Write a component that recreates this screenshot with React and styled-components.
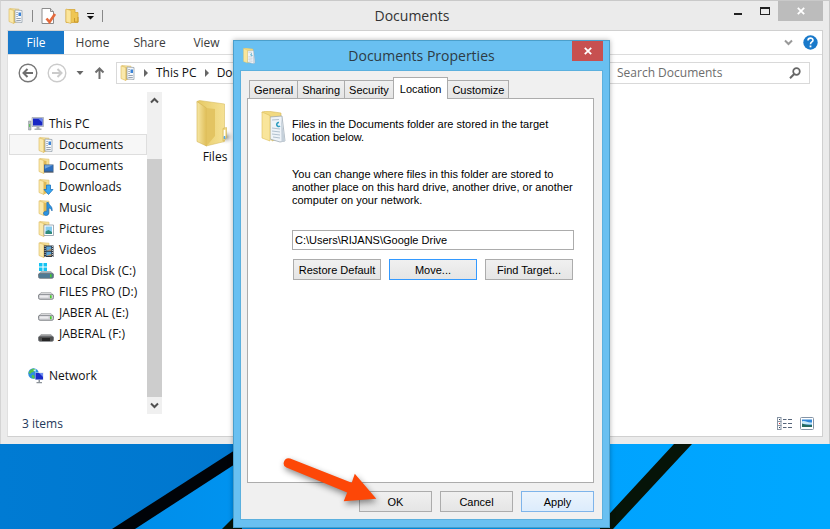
import React from "react";
import styled, { createGlobalStyle } from "styled-components";

const UI_FONT = `"Open Sans", "Noto Sans", sans-serif`;
const DIALOG_FONT = `"Liberation Sans", Arial, sans-serif`;

const Global = createGlobalStyle`
  * { box-sizing: border-box; }
  body { margin: 0; font-family: ${UI_FONT}; font-size: 12px; color: #111; }
  button, input { font: inherit; color: inherit; margin: 0; }
  svg { display: block; flex: none; }
`;

/* ---------- icons ---------- */

const FolderShape = () => (
  <>
    <path d="M2 .5l9 .7v12.300l-6 1.500z" fill="#f4e09a" stroke="#dfc06a" strokeWidth=".6" />
    <path d="M5.500 2.500L8.500 3v10.500L5.500 15.500z" fill="#e0b953" />
    <path d="M1 .8l4.800 1.700v13L1 13.500z" fill="#fae9ac" stroke="#dbb95a" strokeWidth=".6" />
  </>
);

const overlays = {
  documents: (
    <>
      <path d="M7 2l7 .5v12L7 14z" fill="#f5f8fb" stroke="#98a3ae" strokeWidth=".8" />
      <path d="M8.300 4.500h1.500M8.300 6.500h1.500M8.300 8.500h1.500M8.300 10.500h4.500M8.300 12.500h4.500" stroke="#8e9aaa" strokeWidth=".9" />
      <path d="M10.500 4.500H13V8h-2.500z" fill="#3b83d6" />
    </>
  ),
  desktop: (
    <>
      <path d="M6 6.500h9.500V14H6z" fill="#3f5f85" />
      <path d="M6.800 7.300h8v5.500h-8z" fill="#2c6fc0" />
      <path d="M6.800 7.300h8l-8 3.500z" fill="#6fa6df" />
      <path d="M6 14h9.500v1H6z" fill="#8b8f96" />
    </>
  ),
  downloads: (
    <path d="M8.500 6h4v4.500H15L10.500 15.500 6 10.500h2.500z" fill="#3aa7f2" stroke="#1b74bf" strokeWidth=".8" />
  ),
  music: (
    <path d="M8.800 2.500h1.600c.5 3 4.600 3.500 3.600 8.500-.6-2.200-2-2.800-3.200-3V13c0 3.400-5.300 3.200-5.300.6 0-2.100 1.800-2.800 3.300-2.300z" fill="#2b93e0" stroke="#1562a8" strokeWidth=".6" />
  ),
  pictures: (
    <>
      <path d="M6 4h9.500v10.500H6z" fill="#fff" stroke="#8b98a5" strokeWidth=".8" />
      <path d="M7.500 5.500H14V13H7.500z" fill="#84cbee" />
      <path d="M7.500 10.500l3-1.500L14 11v2H7.500z" fill="#2f8a7c" />
    </>
  ),
  videos: (
    <>
      <path d="M6 3.500h9.500V15H6z" fill="#2c3540" />
      <path d="M8.300 4.500h5v4.300h-5zM8.300 9.800h5V14h-5z" fill="#5da6d8" />
      <path d="M8.300 8.800l5-2v2zM8.300 14l5-2v2z" fill="#b98b5b" />
      <path d="M7.100 4v11M14.500 4v11" stroke="#d5dade" strokeWidth=".9" strokeDasharray="1 1" />
    </>
  ),
};

const FolderIcon = ({ kind, size = 16 }) => (
  <svg width={size} height={size} viewBox="0 0 16 16" aria-hidden="true">
    <FolderShape />
    {overlays[kind]}
  </svg>
);

const driveColors = {
  system: { top: "#a5b9c5", body: "#4f7a94" },
  fixed: { top: "#ececee", body: "#cfd0d3" },
  removable: { top: "#a5a5a5", body: "#505050" },
};

const DriveIcon = ({ kind = "fixed" }) => {
  const { top, body } = driveColors[kind];
  return (
    <svg width="16" height="16" viewBox="0 0 16 16" aria-hidden="true">
      {kind === "system" && (
        <path d="M1 0h3.500v3.500H1zM5.500 0H9v3.500H5.500zM1 4.500h3.500V8H1zM5.500 4.500H9V8H5.500z" fill="#14c3f2" />
      )}
      <path d="M3 8.500h10l2.500 3H.5z" fill={top} stroke="#9a9da0" strokeWidth=".6" />
      <rect x=".5" y="10.300" width="15" height="5" rx="1.600" fill={body} stroke="#707478" strokeWidth=".8" />
      {kind === "removable" ? <path d="M4 12h8v3H4z" fill="#262626" /> : <path d="M12 11.300h1.600v3H12z" fill="#46cf2d" />}
      {kind === "fixed" && <path d="M2 11.500h8.500v2H2z" fill="#ececee" />}
    </svg>
  );
};

const ComputerIcon = () => (
  <svg width="16" height="16" viewBox="0 0 16 16" aria-hidden="true">
    <path d="M.5 5h2.500v9H.5z" fill="#b8bfc2" stroke="#858c90" strokeWidth=".5" />
    <path d="M1.200 8h1v3h-1z" fill="#4fbf4a" />
    <path d="M4 1.500h11.500v9H4z" fill="#d4d9de" stroke="#8f979d" strokeWidth=".6" />
    <path d="M5 2.500h9.500v7H5z" fill="#1827c4" />
    <path d="M10 2.500h4.500v4z" fill="#6a86ee" />
    <path d="M8.500 10.500h3v2h2V14h-7v-1.500h2z" fill="#a9aeb2" />
  </svg>
);

const NetworkIcon = () => (
  <svg width="16" height="16" viewBox="0 0 16 16" aria-hidden="true">
    <circle cx="5.500" cy="5.500" r="5.300" fill="#2d8ee0" />
    <path d="M2 2.500C4 0 7 .5 7.500 2 6 3 5.500 4.500 3.500 4.500 3 6 2 6 .5 5zM4 7c2-.5 3 1 2.500 3.500C4.500 11 3 9.500 4 7z" fill="#58c447" />
    <path d="M5 2l3-.8L7.500 4z" fill="#cdeefd" />
    <path d="M7 4.500h8.500v7.500H7z" fill="#dbe0e6" />
    <path d="M7.500 5h7.500v6.500H7.500z" fill="#1a2bc8" />
    <path d="M11 5h4v4z" fill="#6f8df0" />
    <path d="M10.500 12h1.500v2h2v1.300H8.500V14h2z" fill="#8d949a" />
  </svg>
);

const PropertiesIcon = () => (
  <svg width="16" height="16" viewBox="0 0 16 16" aria-hidden="true">
    <path d="M1 .5h8.500l3 3v12H1z" fill="#fff" stroke="#8c8c8c" />
    <path d="M9.500 .5v3h3" fill="#ddd" stroke="#8c8c8c" />
    <path d="M5.500 10.500l3 3.500 5.500-8" fill="none" stroke="#e4693b" strokeWidth="2.600" />
  </svg>
);

const NewFolderIcon = () => (
  <svg width="14" height="16" viewBox="0 0 14 16" aria-hidden="true">
    <path d="M1 1.500h9v3h3v10H1z" fill="#efc653" stroke="#d4a73a" strokeWidth=".8" />
    <path d="M1 1l5 1.500v13L1 14z" fill="#fbe59a" stroke="#d9b04a" strokeWidth=".6" />
    <path d="M9.500 10v4h3.500V9" fill="none" stroke="#c99a2e" />
  </svg>
);

const BigFolder = () => (
  <svg width="38" height="48" viewBox="0 0 38 48" aria-hidden="true">
    <defs>
      <linearGradient id="flap" x1="0" x2="1"><stop offset="0" stopColor="#f7e7a4" /><stop offset="1" stopColor="#dfbe58" /></linearGradient>
      <linearGradient id="leaf" x1="0" x2="1"><stop offset="0" stopColor="#e6c964" /><stop offset="1" stopColor="#f5e194" /></linearGradient>
      <radialGradient id="cast"><stop offset="0" stopColor="#8f8f8f" /><stop offset="1" stopColor="#fff" stopOpacity="0" /></radialGradient>
    </defs>
    <ellipse cx="30" cy="37" rx="9" ry="8" fill="url(#cast)" />
    <path d="M1 1.500L3.500 .5 28.500 4v37.500L10 46z" fill="url(#leaf)" stroke="#d8bd63" strokeWidth=".6" />
    <path d="M27 28.500l3.500-1v10L28 41h-1z" fill="#f3dd8b" stroke="#cfae4d" strokeWidth=".6" />
    <path d="M1 1.500L10.500 8v38L1 41.500z" fill="url(#flap)" stroke="#d3b250" strokeWidth=".6" />
    <path d="M10.500 8l8.500 1v27l-8.500 10z" fill="#e3c462" />
    <path d="M28.500 30v7" stroke="#fff" strokeWidth="1.600" />
    <path d="M28.500 36v3" stroke="#54a9ea" strokeWidth="1.600" />
  </svg>
);

const OpenDocumentsIcon = ({ width, height }) => (
  <svg width={width} height={height} viewBox="0 0 26 32" aria-hidden="true">
    <path d="M1 1l5-1 14 2v25l-9 3z" fill="#f1d981" stroke="#d9bb5c" strokeWidth=".6" />
    <path d="M9 6l12-1 3 25-5 1-10-3z" fill="#eef3f8" stroke="#93a0ac" strokeWidth=".7" />
    <path d="M20 6l4 24-3.500 1z" fill="#c5d0da" />
    <path d="M11 9l7-.5M11 17l8 1M11 20l8 1M11 23l8 1M12 26l7 1" stroke="#a9bac8" strokeWidth=".9" />
    <path d="M18 11.500a2 2 0 1 0 1 3.500" fill="none" stroke="#2e9dc0" strokeWidth="1.600" />
    <path d="M1 1l8 3.500v25.500L1 27z" fill="#f9e59b" stroke="#dcbd5a" strokeWidth=".6" />
  </svg>
);

const NavArrow = ({ forward }) => (
  <svg width="20" height="20" viewBox="0 0 20 20" aria-hidden="true">
    <circle cx="10" cy="10" r="8.800" fill="#fff" stroke={forward ? "#cbcbcb" : "#777"} strokeWidth="1.400" />
    <path
      d={forward ? "M5 10h9M10.500 6l4 4-4 4" : "M15 10H6M9.500 6l-4 4 4 4"}
      fill="none" stroke={forward ? "#cbcbcb" : "#6e6e6e"} strokeWidth="2"
    />
  </svg>
);

const Triangle = ({ down }) => (
  <svg width="8" height="8" viewBox="0 0 8 8" aria-hidden="true">
    <path d={down ? "M.5 2h7L4 6z" : "M2 0l4 4-4 4z"} fill="#666" />
  </svg>
);

const UpArrow = () => (
  <svg width="12" height="12" viewBox="0 0 12 12" aria-hidden="true">
    <path d="M6.500 12V2M2.500 5.500l4-4 4 4" fill="none" stroke="#6e6e6e" strokeWidth="2" />
  </svg>
);

const Chevron = ({ up, color = "#505050" }) => (
  <svg width="9" height="7" viewBox="0 0 9 7" aria-hidden="true">
    <path d={up ? "M1 5.500l3.500-3.500L8 5.500" : "M1 1.500L4.500 5 8 1.500"} fill="none" stroke={color} strokeWidth="2" />
  </svg>
);

const SearchIcon = () => (
  <svg width="12" height="12" viewBox="0 0 12 12" aria-hidden="true">
    <circle cx="7.500" cy="4.500" r="3.300" fill="none" stroke="#666" strokeWidth="1.700" />
    <path d="M5.200 7L1 11.200" stroke="#666" strokeWidth="2" />
  </svg>
);

const HelpIcon = () => (
  <svg width="15" height="15" viewBox="0 0 15 15" aria-hidden="true">
    <circle cx="7.500" cy="7.500" r="7.200" fill="#1979ca" />
    <path d="M5 5.500c0-3.200 5-3 5-.3 0 1.800-2.500 1.800-2.500 4" fill="none" stroke="#fff" strokeWidth="1.600" />
    <path d="M6.600 10.500h1.800v1.800H6.600z" fill="#fff" />
  </svg>
);

const CrossIcon = () => (
  <svg width="8" height="8" viewBox="0 0 8 8" aria-hidden="true">
    <path d="M.8.800l6.400 6.400M7.200.800L.8 7.200" stroke="#fff" strokeWidth="1.800" />
  </svg>
);

const QuickMenuIcon = () => (
  <svg width="7" height="7" viewBox="0 0 7 7" aria-hidden="true">
    <path d="M0 0h7v1H0zM0 3h7L3.500 6.500z" fill="#111" />
  </svg>
);

const MinimizeIcon = () => (
  <svg width="8" height="10" viewBox="0 0 8 10" aria-hidden="true"><path d="M0 7h8v2H0z" fill="#222" /></svg>
);

const MaximizeIcon = () => (
  <svg width="10" height="10" viewBox="0 0 10 10" aria-hidden="true">
    <path d="M0 1h10v8H0zM1 3v5h8V3z" fillRule="evenodd" fill="#222" />
  </svg>
);

const DetailsViewIcon = () => (
  <svg width="15" height="13" viewBox="0 0 15 13" aria-hidden="true">
    {[0, 4, 8].map((y) => (
      <g key={y}>
        <rect x=".5" y={y + 0.5} width="3.500" height="4" fill="#fff" stroke="#8795a5" />
        <path d={`M6 ${y + 2.5}h3.500M11 ${y + 2.5}h4`} stroke="#56657a" />
        <path d={`M2 ${y + 2}h1v1H2z`} fill={y === 4 ? "#d33" : "#345"} />
      </g>
    ))}
  </svg>
);

const LargeViewIcon = () => (
  <svg width="14" height="13" viewBox="0 0 14 13" aria-hidden="true">
    <rect x=".5" y=".5" width="13" height="12" rx="1" fill="#fff" stroke="#8494a6" />
    <path d="M2 2.500h10v7.500H2z" fill="#2f86d8" />
    <path d="M2 4.500c3-1.500 5 1.500 10 1V7.500H2z" fill="#c9e9f9" />
    <path d="M2 6.500c3 1 6 1.500 10 1.500v2H2z" fill="#256a60" />
  </svg>
);

/* ---------- desktop ---------- */

const Desktop = styled.div`
  position: relative;
  min-height: 100vh;
  overflow: hidden;
  background: #0079d1;
`;

const WallpaperSvg = styled.svg`
  position: absolute;
  inset: 0;
  width: 100%;
  height: 100%;
`;

const Wallpaper = () => (
  <WallpaperSvg viewBox="0 0 830 529" preserveAspectRatio="xMidYMax slice" aria-hidden="true">
    <defs>
      <linearGradient id="sky"><stop offset="0" stopColor="#007bd3" /><stop offset="1" stopColor="#0074cb" /></linearGradient>
      <linearGradient id="pane"><stop offset="0" stopColor="#008de9" /><stop offset=".5" stopColor="#00a0fe" /><stop offset="1" stopColor="#00a8ff" /></linearGradient>
    </defs>
    <path d="M0 0h400v529H0z" fill="url(#sky)" />
    <path d="M124 529L400 350V0h430v529z" fill="url(#pane)" />
    <path d="M112 529L246 443v14L135 529z" fill="#000308" />
    <path d="M222 529l20-20v20zM674 444h18L613 529h-13v-5z" fill="#061408" />
  </WallpaperSvg>
);

/* ---------- explorer window ---------- */

const Explorer = styled.main`
  position: relative;
  border: 1px solid #c9c9c9;
  border-bottom: 0;
  border-left-color: #d4d4d4;
  background: #ebebeb;
  padding: 0 6px 7px;
`;

const TitleBar = styled.header`
  display: grid;
  grid-template-columns: 1fr auto 1fr;
  height: 29px;
`;

const WindowTitle = styled.h1`
  margin: 0;
  padding-right: 6px;
  font-size: 14px;
  font-weight: 400;
  line-height: 30px;
  color: #333;
`;

const QuickAccess = styled.div`
  display: flex;
  align-items: center;
  gap: 8px;
  padding-left: 1px;
`;

const Divider = styled.span`
  width: 1px;
  height: 12px;
  background: #888;
`;

const WindowControls = styled.div`
  display: flex;
  justify-content: flex-end;
  align-items: flex-start;
`;

const PlainButton = styled.button`
  display: flex;
  align-items: center;
  justify-content: center;
  border: 0;
  padding: 0;
  background: none;
`;

const CaptionButton = styled(PlainButton)`
  width: ${(p) => (p.$close ? 45 : 27)}px;
  height: 20px;
  background: ${(p) => (p.$close ? "#bcbcbc" : "none")};
`;

const Frame = styled.div`
  border: 1px solid #d0d0d0;
  border-left-color: #e0e0e0;
  background: #fff;
`;

const Ribbon = styled.nav`
  display: flex;
  align-items: center;
  height: 24px;
  border-bottom: 1px solid #dcdcdc;
  padding-right: 4px;
`;

const RibbonTab = styled(PlainButton)`
  width: ${(p) => (p.$primary ? 56 : 57)}px;
  height: 23px;
  color: ${(p) => (p.$primary ? "#fff" : "#3c3c3c")};
  background: ${(p) => (p.$primary ? "#1979ca" : "none")};
`;

const Spring = styled.span`
  flex: 1;
`;

const RibbonTools = styled.div`
  display: flex;
  align-items: center;
  gap: 10px;
`;

const AddressRow = styled.div`
  display: flex;
  align-items: center;
  height: 35px;
  padding: 0 12px 0 10px;
`;

const NavButtons = styled.div`
  display: flex;
  align-items: center;
  gap: 9px;
  width: 98px;
`;

const Breadcrumb = styled.div`
  display: flex;
  flex: 1;
  align-items: center;
  gap: 6px;
  height: 22px;
  border: 1px solid #d9d9d9;
  padding-left: 3px;
`;

const SearchBox = styled.label`
  display: flex;
  align-items: center;
  width: 210px;
  height: 22px;
  margin-left: 12px;
  border: 1px solid #d9d9d9;
  padding: 0 8px 0 16px;
`;

const SearchInput = styled.input`
  flex: 1;
  min-width: 0;
  border: 0;
  padding: 0;
  outline: 0;
  background: none;
  &::placeholder { color: #6d6d6d; opacity: 1; }
`;

const Panes = styled.div`
  display: flex;
  align-items: stretch;
  padding-left: 1px;
`;

const Sidebar = styled.nav`
  width: 138px;
  padding: 23px 0 28px;
`;

const TreeItem = styled.a`
  display: flex;
  align-items: center;
  gap: 5px;
  height: 21px;
  margin-top: ${(p) => (p.$spaced ? 21 : 0)}px;
  border: 1px solid ${(p) => (p.$selected ? "#dedede" : "transparent")};
  padding-left: ${(p) => (p.$root ? 18 : 28)}px;
  background: ${(p) => (p.$selected ? "#f7f7f7" : "none")};
  color: inherit;
  text-decoration: none;
  white-space: nowrap;
`;

const Scrollbar = styled.div`
  display: flex;
  flex-direction: column;
  width: 15px;
  margin-top: 2px;
  background: #f0f0f0;
`;

const ScrollButton = styled(PlainButton)`
  height: 17px;
`;

const ScrollThumb = styled.div`
  flex: 1;
  margin-top: 50px;
  background: #cdcdcd;
`;

const FileArea = styled.section`
  flex: 1;
  padding: 10px 0 0 34px;
`;

const FileItem = styled.a`
  display: inline-flex;
  flex-direction: column;
  align-items: center;
  color: inherit;
  text-decoration: none;
`;

const StatusBar = styled.footer`
  display: flex;
  align-items: center;
  justify-content: space-between;
  height: 22px;
  padding: 0 8px 3px 14px;
  color: #1e395b;
`;

const ViewButtons = styled.div`
  display: flex;
  gap: 8px;
`;

const tree = [
  { label: "Documents", icon: <FolderIcon kind="documents" />, selected: true },
  { label: "Documents", icon: <FolderIcon kind="desktop" /> },
  { label: "Downloads", icon: <FolderIcon kind="downloads" /> },
  { label: "Music", icon: <FolderIcon kind="music" /> },
  { label: "Pictures", icon: <FolderIcon kind="pictures" /> },
  { label: "Videos", icon: <FolderIcon kind="videos" /> },
  { label: "Local Disk (C:)", icon: <DriveIcon kind="system" /> },
  { label: "FILES PRO (D:)", icon: <DriveIcon /> },
  { label: "JABER AL (E:)", icon: <DriveIcon /> },
  { label: "JABERAL (F:)", icon: <DriveIcon kind="removable" /> },
];

const ExplorerWindow = () => (
  <Explorer>
    <TitleBar>
      <QuickAccess>
        <FolderIcon kind="documents" />
        <Divider />
        <PlainButton aria-label="Properties"><PropertiesIcon /></PlainButton>
        <PlainButton aria-label="New folder"><NewFolderIcon /></PlainButton>
        <PlainButton aria-label="Customize quick access"><QuickMenuIcon /></PlainButton>
        <Divider />
      </QuickAccess>
      <WindowTitle>Documents</WindowTitle>
      <WindowControls>
        <CaptionButton aria-label="Minimize"><MinimizeIcon /></CaptionButton>
        <CaptionButton aria-label="Maximize"><MaximizeIcon /></CaptionButton>
        <CaptionButton $close aria-label="Close"><CrossIcon /></CaptionButton>
      </WindowControls>
    </TitleBar>
    <Frame>
      <Ribbon>
        <RibbonTab $primary>File</RibbonTab>
        <RibbonTab>Home</RibbonTab>
        <RibbonTab>Share</RibbonTab>
        <RibbonTab>View</RibbonTab>
        <Spring />
        <RibbonTools>
          <PlainButton aria-label="Expand ribbon"><Chevron color="#999" /></PlainButton>
          <PlainButton aria-label="Help"><HelpIcon /></PlainButton>
        </RibbonTools>
      </Ribbon>
      <AddressRow>
        <NavButtons>
          <PlainButton aria-label="Back"><NavArrow /></PlainButton>
          <PlainButton aria-label="Forward"><NavArrow forward /></PlainButton>
          <PlainButton aria-label="Recent locations"><Triangle down /></PlainButton>
          <PlainButton aria-label="Up"><UpArrow /></PlainButton>
        </NavButtons>
        <Breadcrumb>
          <FolderIcon kind="documents" />
          <Triangle />
          <span>This PC</span>
          <Triangle />
          <span>Documents</span>
        </Breadcrumb>
        <SearchBox>
          <SearchInput type="search" aria-label="Search Documents" placeholder="Search Documents" />
          <SearchIcon />
        </SearchBox>
      </AddressRow>
      <Panes>
        <Sidebar>
          <TreeItem href="#pc" $root><ComputerIcon />This PC</TreeItem>
          {tree.map(({ label, icon, selected }, i) => (
            <TreeItem key={i} href={`#item-${i}`} $selected={selected}>{icon}{label}</TreeItem>
          ))}
          <TreeItem href="#network" $root $spaced><NetworkIcon />Network</TreeItem>
        </Sidebar>
        <Scrollbar>
          <ScrollButton aria-label="Scroll up"><Chevron up /></ScrollButton>
          <ScrollThumb />
          <ScrollButton aria-label="Scroll down"><Chevron /></ScrollButton>
        </Scrollbar>
        <FileArea>
          <FileItem href="#files"><BigFolder />Files</FileItem>
        </FileArea>
      </Panes>
      <StatusBar>
        <span>3 items</span>
        <ViewButtons>
          <PlainButton aria-label="Details view"><DetailsViewIcon /></PlainButton>
          <PlainButton aria-label="Large icons view"><LargeViewIcon /></PlainButton>
        </ViewButtons>
      </StatusBar>
    </Frame>
  </Explorer>
);

/* ---------- properties dialog ---------- */

const Dialog = styled.section`
  position: absolute;
  top: 40px;
  left: 233px;
  width: 377px;
  border: 1px solid #4b9fcb;
  padding: 0 6px 7px;
  background: #69c0f1;
  box-shadow: 0 0 5px rgba(0, 0, 0, 0.3);
  font-family: ${DIALOG_FONT};
  font-size: 11px;
  color: #000;
`;

const DialogTitleBar = styled.header`
  display: grid;
  grid-template-columns: 1fr auto 1fr;
  height: 29px;
  padding-left: 3px;
`;

const DialogTitle = styled.h2`
  margin: 0;
  padding-right: 3px;
  font-family: ${UI_FONT};
  font-size: 14px;
  font-weight: 400;
  line-height: 29px;
  color: #2d3b45;
`;

const DialogIcon = styled.span`
  display: flex;
  align-items: center;
`;

const DialogClose = styled(PlainButton)`
  justify-self: end;
  width: 31px;
  height: 20px;
  background: #c75050;
`;

const DialogBody = styled.div`
  border: 1px solid #5bb0de;
  padding: 6px 8px 7px 6px;
  background: #f0f0f0;
`;

const TabList = styled.div`
  display: flex;
  align-items: flex-end;
  height: 21px;
  padding-left: 3px;
`;

const Tab = styled.button`
  position: relative;
  height: ${(p) => (p.$active ? 22 : 18)}px;
  margin: 0 0 ${(p) => (p.$active ? -1 : 0)}px -1px;
  border: 1px solid #acacac;
  border-bottom: 0;
  padding: 0 ${(p) => (p.$active ? 6 : 4)}px;
  z-index: ${(p) => (p.$active ? 1 : 0)};
  background: ${(p) => (p.$active ? "#fff" : "linear-gradient(#f0f0f0, #e5e5e5)")};
`;

const TabPanel = styled.div`
  min-height: 385px;
  border: 1px solid #acacac;
  padding: 12px 19px 0 13px;
  background: #fff;
`;

const Intro = styled.div`
  display: flex;
  gap: 5px;
`;

const Copy = styled.p`
  margin: 0;
  padding-top: ${(p) => (p.$spaced ? 24 : 7)}px;
  line-height: 13px;
`;

const Details = styled.div`
  padding-left: 31px;
`;

const PathInput = styled.input`
  display: block;
  width: 100%;
  height: 20px;
  margin: 23px 0 9px;
  border: 1px solid #acacac;
  padding: 0 2px;
  background: #fff;
`;

const PushButton = styled.button`
  flex: 1;
  height: 21px;
  border: 1px solid ${(p) => (p.$tone === "focus" ? "#3399ff" : p.$tone === "hover" ? "#7eb4ea" : "#acacac")};
  padding: 0;
  background: ${(p) => (p.$tone === "hover" ? "linear-gradient(#ecf4fc, #dcecfc)" : "linear-gradient(#f0f0f0, #e5e5e5)")};
`;

const PathActions = styled.div`
  display: flex;
  gap: 8px;
  padding: 0 1px;
`;

const DialogActions = styled.div`
  display: flex;
  gap: 8px;
  width: 235px;
  margin: 8px 0 0 auto;
`;

const PointerSvg = styled.svg`
  position: absolute;
  top: 415px;
  left: 46px;
  filter: drop-shadow(1px 3px 3px rgba(0, 0, 0, 0.45));
  pointer-events: none;
`;

const PointerArrow = () => (
  <PointerSvg width="100" height="52" viewBox="280 456 100 52" aria-hidden="true">
    <path d="M290.200 458.600L351.700 482.700 354.800 473.800 376.300 498.800 343.700 501.200 347.200 492.500 286.400 467.600A4.900 4.900 0 0 1 290.200 458.600z" fill="#fd4707" />
  </PointerSvg>
);

const tabs = ["General", "Sharing", "Security", "Location", "Customize"];

const PropertiesDialog = () => (
  <Dialog role="dialog" aria-labelledby="dialog-title">
    <DialogTitleBar>
      <DialogIcon><OpenDocumentsIcon width={13} height={16} /></DialogIcon>
      <DialogTitle id="dialog-title">Documents Properties</DialogTitle>
      <DialogClose aria-label="Close"><CrossIcon /></DialogClose>
    </DialogTitleBar>
    <DialogBody>
      <TabList role="tablist">
        {tabs.map((name) => (
          <Tab key={name} role="tab" aria-selected={name === "Location"} $active={name === "Location"}>{name}</Tab>
        ))}
      </TabList>
      <TabPanel role="tabpanel">
        <Intro>
          <OpenDocumentsIcon width={26} height={32} />
          <Copy>Files in the Documents folder are stored in the target<br />location below.</Copy>
        </Intro>
        <Details>
          <Copy $spaced>
            You can change where files in this folder are stored to
            <br />another place on this hard drive, another drive, or another
            <br />computer on your network.
          </Copy>
          <PathInput aria-label="Folder location" defaultValue="C:\Users\RIJANS\Google Drive" />
          <PathActions>
            <PushButton>Restore Default</PushButton>
            <PushButton $tone="focus">Move...</PushButton>
            <PushButton>Find Target...</PushButton>
          </PathActions>
        </Details>
      </TabPanel>
      <DialogActions>
        <PushButton>OK</PushButton>
        <PushButton>Cancel</PushButton>
        <PushButton $tone="hover">Apply</PushButton>
      </DialogActions>
    </DialogBody>
    <PointerArrow />
  </Dialog>
);

export default function App() {
  return (
    <Desktop>
      <Global />
      <Wallpaper />
      <ExplorerWindow />
      <PropertiesDialog />
    </Desktop>
  );
}
